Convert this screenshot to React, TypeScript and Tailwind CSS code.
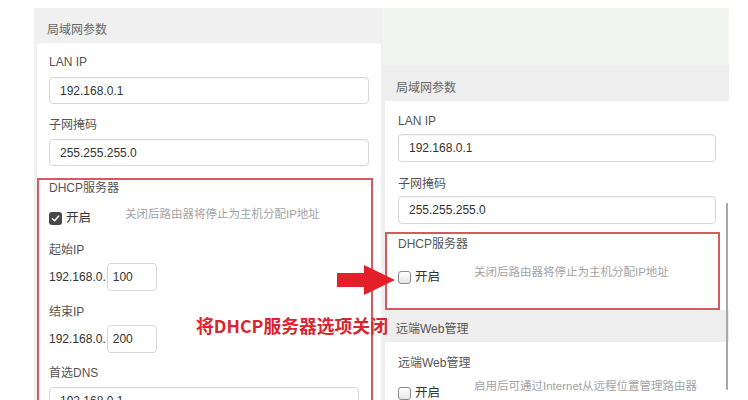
import React from "react";

const font = { fontFamily: '"Liberation Sans", "Noto Sans CJK SC", sans-serif' };

function Label({ children, className = "" }: { children: React.ReactNode; className?: string }) {
  return <div className={`text-[12px] leading-[16px] text-[#555] ${className}`}>{children}</div>;
}

function Input({ value, className = "" }: { value: string; className?: string }) {
  return (
    <div
      className={`flex items-center rounded-[4px] border border-[#d8d8d8] bg-white pl-[10px] text-[12px] text-[#333] shadow-[inset_0_1px_1px_rgba(0,0,0,0.04)] ${className}`}
    >
      {value}
    </div>
  );
}

function Checkbox({ checked }: { checked: boolean }) {
  if (checked) {
    return (
      <div className="flex h-[13px] w-[13px] items-center justify-center rounded-[3px] bg-[#474747]">
        <svg width="9" height="9" viewBox="0 0 10 10">
          <path d="M1.5 5.2 L4 7.6 L8.6 2.2" fill="none" stroke="white" strokeWidth="1.6" strokeLinecap="round" strokeLinejoin="round" />
        </svg>
      </div>
    );
  }
  return <div className="h-[13px] w-[13px] rounded-[3px] border border-[#8a8a8a] bg-gradient-to-b from-white to-[#e6e6e6]" />;
}

function Toggle({ checked, hint, hintClass = "" }: { checked: boolean; hint: string; hintClass?: string }) {
  return (
    <div className="flex items-start">
      <div className="flex w-[76px] items-center gap-[4px]">
        <Checkbox checked={checked} />
        <span className="text-[12.5px] leading-[16px] text-[#333]">开启</span>
      </div>
      <div className={`text-[11.5px] leading-[14px] text-[#a3a3a3] ${hintClass}`}>{hint}</div>
    </div>
  );
}

function IpRow({ value }: { value: string }) {
  return (
    <div className="flex items-center">
      <span className="text-[12px] text-[#333]">192.168.0.</span>
      <div className="ml-[1px] flex h-[28px] w-[50px] items-center rounded-[4px] border border-[#d8d8d8] bg-white pl-[5px] text-[12px] text-[#333]">
        {value}
      </div>
    </div>
  );
}

export default function App() {
  return (
    <div className="relative h-[400px] w-[748px] overflow-hidden bg-white" style={font}>
      <div className="flex pl-[34px] pt-[8px]">
        {/* Left panel */}
        <div className="h-[392px] w-[349px] bg-[#f0f0f0]">
          <div className="h-[35px] pl-[13px] pt-[14px] text-[12px] leading-[16px] text-[#666]">局域网参数</div>
          <div className="ml-[3px] mr-[2px] h-[400px] rounded-t-[4px] bg-white px-[12px]">
            <Label className="pt-[11px]">LAN IP</Label>
            <Input value="192.168.0.1" className="mt-[7px] h-[27px]" />
            <Label className="mt-[13px]">子网掩码</Label>
            <Input value="255.255.255.0" className="mt-[6px] h-[27px]" />
            <div className="-ml-[12px] mt-[12px] h-[260px] w-[336px] border-2 border-[#d35a61] pl-[10px] pr-[10px]">
              <Label>DHCP服务器</Label>
              <div className="mt-[14px]">
                <Toggle checked hint="关闭后路由器将停止为主机分配IP地址" hintClass="-mt-[3px]" />
              </div>
              <Label className="mt-[16px]">起始IP</Label>
              <div className="mt-[5px]">
                <IpRow value="100" />
              </div>
              <Label className="mt-[13px]">结束IP</Label>
              <div className="mt-[5px]">
                <IpRow value="200" />
              </div>
              <Label className="mt-[12px]">首选DNS</Label>
              <Input value="192.168.0.1" className="mt-[6px] mr-[2px] h-[27px]" />
            </div>
          </div>
        </div>

        {/* Right panel */}
        <div className="relative h-[392px] w-[346px] bg-[#eeeeee]">
          <div className="h-[57px] bg-[#f3f5f3]" />
          <div className="h-[36px] pl-[13px] pt-[15px] text-[12px] leading-[16px] text-[#666]">局域网参数</div>
          <div className="ml-[2px] h-[209px] bg-white px-[13px]">
            <Label className="pt-[12px]">LAN IP</Label>
            <Input value="192.168.0.1" className="mt-[5px] h-[28px]" />
            <Label className="mt-[14px]">子网掩码</Label>
            <Input value="255.255.255.0" className="mt-[4px] h-[28px]" />
            <div className="-ml-[13px] mt-[8px] h-[78px] w-[335px] border-2 border-[#d35a61] pl-[11px] pt-[2px]">
              <Label>DHCP服务器</Label>
              <div className="mt-[17px]">
                <Toggle checked={false} hint="关闭后路由器将停止为主机分配IP地址" hintClass="-mt-[4px]" />
              </div>
            </div>
          </div>
          <div className="h-[32px] pl-[13px] pt-[11px] text-[12px] leading-[16px] text-[#555]">远端Web管理</div>
          <div className="ml-[2px] h-[80px] bg-white px-[13px]">
            <Label className="pt-[13px]">远端Web管理</Label>
            <div className="mt-[14px]">
              <Toggle checked={false} hint="启用后可通过Internet从远程位置管理路由器" hintClass="-mt-[6px]" />
            </div>
          </div>
          {/* scrollbar */}
          <div className="absolute right-[1px] top-[195px] h-[187px] w-[2px] rounded-full bg-[#a8a8a8]" />
        </div>
      </div>

      {/* Annotation arrow */}
      <svg className="absolute left-[336px] top-[262px]" width="62" height="36" viewBox="0 0 62 36">
        <polygon points="1,11 28,11 28,3 59,18 28,33 28,25 1,25" fill="#e3202a" />
      </svg>

      {/* Annotation text */}
      <div className="absolute left-[196px] top-[314px] whitespace-nowrap text-[17.8px] font-bold leading-[22px] text-[#d7262e]" style={{ fontFamily: '"Noto Sans CJK SC", "Liberation Sans", sans-serif' }}>
        将DHCP服务器选项关闭
      </div>
    </div>
  );
}
